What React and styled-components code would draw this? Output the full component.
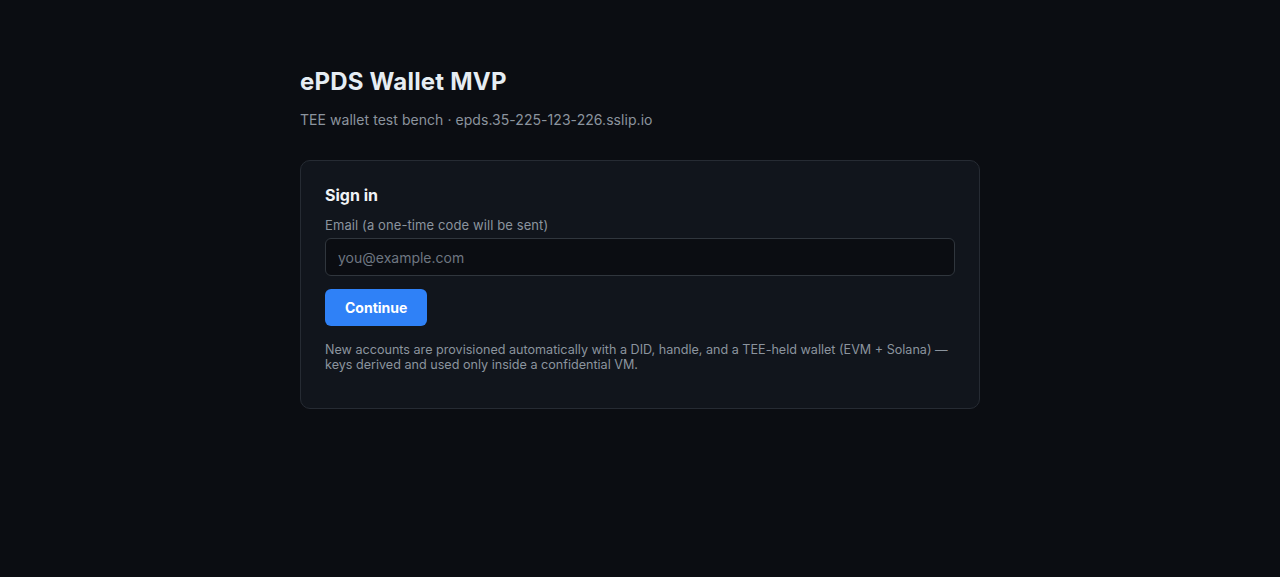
import React from "react";
import styled, { createGlobalStyle } from "styled-components";

const GlobalStyle = createGlobalStyle`
  html, body {
    margin: 0;
    background: #0b0d12;
    color: #e6edf3;
    font-family: Inter, "Noto Sans", sans-serif;
  }
`;

const Page = styled.main`
  min-height: 577px;
  display: flex;
  justify-content: center;
  padding-top: 67px;
  box-sizing: border-box;
`;

const Wrap = styled.div`
  width: 680px;
`;

const Title = styled.h1`
  margin: 0;
  font-size: 24px;
  line-height: 30px;
  font-weight: 700;
  color: #e6edf3;
  letter-spacing: 0.2px;
`;

const Sub = styled.p`
  margin: 14px 0 0;
  font-size: 14px;
  line-height: 18px;
  color: #8b949e;
  letter-spacing: 0.05px;
`;

const Card = styled.section`
  margin-top: 31px;
  background: #11151c;
  border: 1px solid #262b33;
  border-radius: 10px;
  padding: 24px 24px 36px;
`;

const CardTitle = styled.h2`
  margin: 0;
  font-size: 16px;
  line-height: 20px;
  font-weight: 700;
  color: #f0f3f6;
`;

const Label = styled.label`
  display: block;
  margin-top: 12px;
  font-size: 13px;
  line-height: 16px;
  color: #8b949e;
  letter-spacing: 0.1px;
`;

const Input = styled.input`
  display: block;
  box-sizing: border-box;
  width: 100%;
  height: 38px;
  margin-top: 5px;
  padding: 0 12px;
  background: #0b0d12;
  border: 1px solid #30363d;
  border-radius: 6px;
  color: #e6edf3;
  font-family: inherit;
  font-size: 14px;
  outline: none;
  &::placeholder {
    color: #6e7681;
  }
`;

const Button = styled.button`
  margin-top: 13px;
  height: 37px;
  padding: 0 20px;
  background: #2f81f7;
  border: none;
  border-radius: 6px;
  color: #fff;
  font-family: inherit;
  font-size: 14px;
  font-weight: 700;
  cursor: pointer;
`;

const Note = styled.p`
  margin: 16px 0 0;
  font-size: 12.6px;
  line-height: 15px;
  color: #8b949e;
`;

export default function App() {
  return (
    <>
      <GlobalStyle />
      <Page>
        <Wrap>
          <Title>ePDS Wallet MVP</Title>
          <Sub>TEE wallet test bench · epds.35-225-123-226.sslip.io</Sub>
          <Card>
            <CardTitle>Sign in</CardTitle>
            <Label htmlFor="email">Email (a one-time code will be sent)</Label>
            <Input id="email" type="email" placeholder="you@example.com" />
            <Button>Continue</Button>
            <Note>
              New accounts are provisioned automatically with a DID, handle, and a
              TEE-held wallet (EVM + Solana) — keys derived and used only inside a
              confidential VM.
            </Note>
          </Card>
        </Wrap>
      </Page>
    </>
  );
}
